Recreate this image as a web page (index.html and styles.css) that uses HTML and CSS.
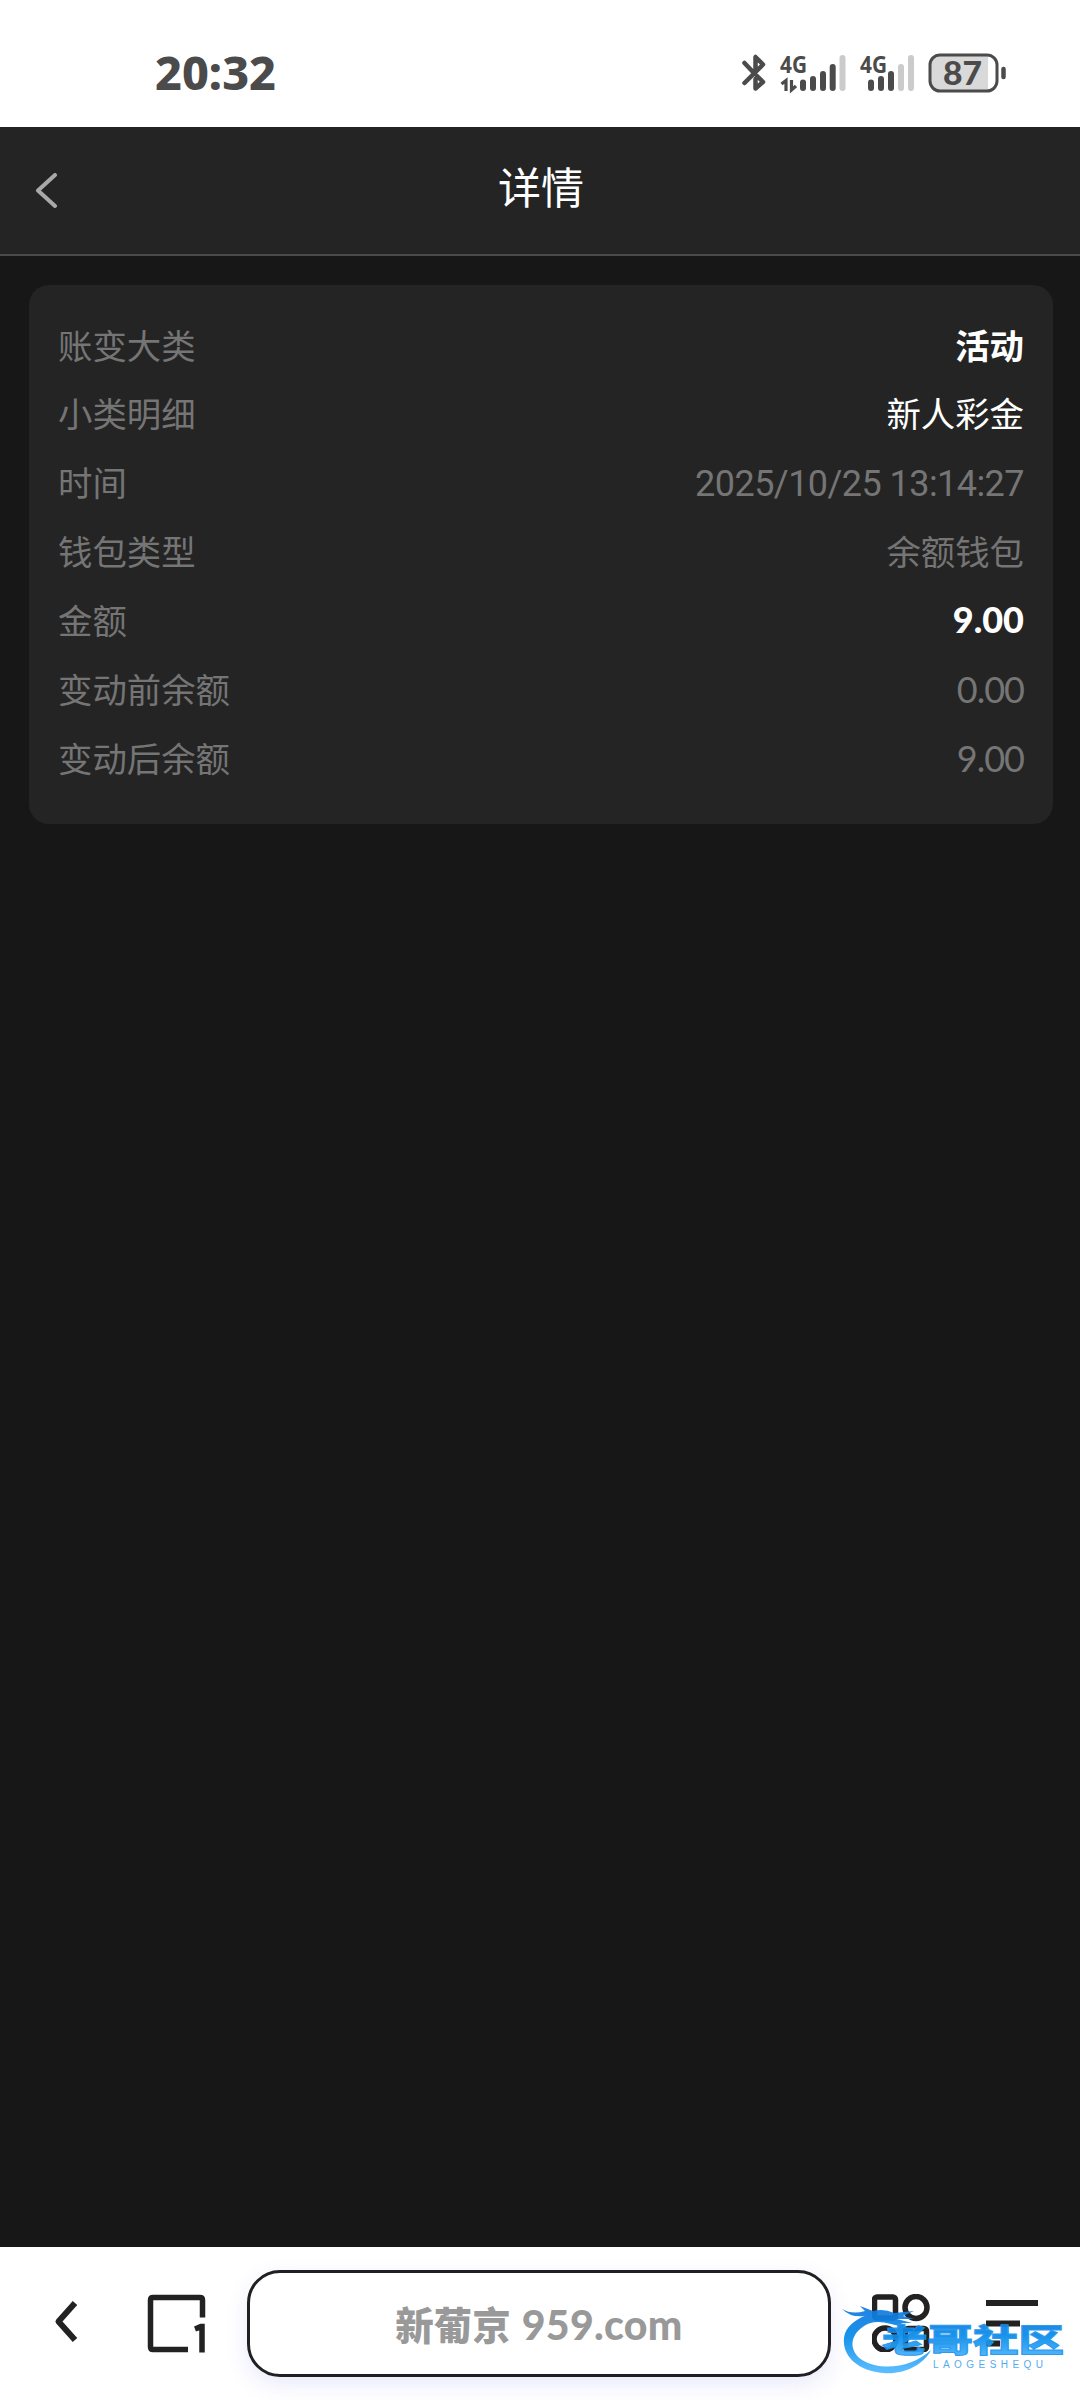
FILE: index.html
```html
<!DOCTYPE html>
<html lang="zh-CN">

<head>
  <meta charset="UTF-8">
  <meta name="viewport" content="width=device-width, initial-scale=1.0">
  <title>详情</title>
  <link rel="stylesheet" href="styles.css">
</head>

<body>
  <div class="status-bar">
    <svg class="status-svg" width="1080" height="127" viewBox="0 0 1080 127">
      <text class="clock" x="155" y="90" textLength="121" lengthAdjust="spacingAndGlyphs">20:32</text>
      <!-- bluetooth -->
      <path class="bt" d="M744.500 63 L753 72 M744.500 83 L763 64.500 L755.500 57 V70 M755.500 79 V88.500 L763 82 L757 76"/>
      <!-- sim 1 -->
      <text class="net" x="780" y="73" textLength="27" lengthAdjust="spacingAndGlyphs">4G</text>
      <path class="arrows" d="M781.500 84 L786 80.500 V91 M791.500 80 V90 L796 86"/>
      <path class="bar" d="M803 82.500 V88 M813 79 V88 M823 74 V88 M832.700 67 V88"/>
      <path class="bar off" d="M842.500 58 V88"/>
      <!-- sim 2 -->
      <text class="net" x="860" y="73" textLength="27" lengthAdjust="spacingAndGlyphs">4G</text>
      <path class="bar" d="M871 82.500 V88 M881 79 V88 M891 74 V88"/>
      <path class="bar off" d="M901 67 V88 M911 58 V88"/>
      <!-- battery -->
      <path class="fill" d="M941 55 H988 V91 H941 Q930 91 930 80 V66 Q930 55 941 55Z"/>
      <rect class="case" x="930" y="55" width="67" height="36" rx="10"/>
      <path class="tip" d="M1003.500 69 V77"/>
      <text class="level" x="943" y="84.500" textLength="39" lengthAdjust="spacingAndGlyphs">87</text>
    </svg>
  </div>

  <header class="header">
    <svg class="back" width="24" height="36" viewBox="0 0 24 36">
      <path d="M20 2 L3 17.500 L20 33"/>
    </svg>
    <h1 class="title">详情</h1>
  </header>

  <main class="content">
    <div class="card">
      <div class="row"><span>账变大类</span><span class="strong">活动</span></div>
      <div class="row"><span>小类明细</span><span class="white">新人彩金</span></div>
      <div class="row"><span>时间</span><span class="date">2025/10/25 13:14:27</span></div>
      <div class="row"><span>钱包类型</span><span>余额钱包</span></div>
      <div class="row"><span>金额</span><span class="strong num">9.00</span></div>
      <div class="row"><span>变动前余额</span><span class="num">0.00</span></div>
      <div class="row"><span>变动后余额</span><span class="num">9.00</span></div>
    </div>
  </main>

  <nav class="toolbar">
    <svg class="nav-back" width="26" height="44" viewBox="0 0 26 44">
      <path d="M21 3 L4.500 21.500 L21 40"/>
    </svg>
    <svg class="tabs" width="62" height="60" viewBox="0 0 62 60">
      <path d="M57.500 23.500 V6 Q57.500 3.500 55 3.500 H8 Q5.500 3.500 5.500 6 V53 Q5.500 55.500 8 55.500 H43"/>
      <path d="M50 35 Q54 33.500 56 32.500 H57 V58.500"/>
    </svg>
    <div class="address"><span>新葡京</span><span class="site">959.com</span></div>
    <svg class="apps" width="58" height="58" viewBox="0 0 58 58">
      <rect x="2.500" y="3" width="21" height="21" rx="2.500"/>
      <circle cx="44" cy="13.500" r="11"/>
      <circle cx="13" cy="45" r="11"/>
      <rect x="33.500" y="34.500" width="21" height="21" rx="2.500"/>
    </svg>
    <svg class="menu" width="54" height="48" viewBox="0 0 54 48">
      <path d="M1 4 H53 M1 24.500 H35 M1 44.500 H15"/>
    </svg>

    <svg class="watermark" width="240" height="100" viewBox="0 0 240 100">
      <defs>
        <linearGradient id="blue" x1="0" y1="0" x2="0" y2="1">
          <stop offset="0" stop-color="#1479dd"/>
          <stop offset=".45" stop-color="#078bea"/>
          <stop offset="1" stop-color="#52baff"/>
        </linearGradient>
      </defs>
      <path fill="url(#blue)" d="M2 8 Q12 14 25 10 L20 5 L33 10 Q44 7 54 12 L74 10 L63 15 L74 18 L57 18 L72 22 L61 22 L68 27 L51 23 Q34 18 24 25 C10 34 8 49 22 59 C42 71 73 66 91 49 C83 65 62 74 43 72 C19 70 2 56 4 37 C5 26 16 18 25 15 Q11 17 2 8Z"/>
      <text class="wm-name" x="42" y="51" textLength="182" lengthAdjust="spacingAndGlyphs">老哥社区</text>
      <text class="wm-sub" x="93" y="66.500" textLength="110">LAOGESHEQU</text>
    </svg>
  </nav>
</body>

</html>
```
FILE: styles.css
```css
* {
  box-sizing: border-box;
}

body {
  margin: 0;
  height: 2400px;
  display: flex;
  flex-direction: column;
  background: #171717;
  font-family: "Noto Sans CJK SC", sans-serif;
  overflow: hidden;
}

svg {
  display: block;
  flex: none;
  fill: none;
}

/* status bar */
.status-bar {
  height: 127px;
  background: #fff;
}

.status-svg text {
  fill: #4b4b4b;
}

.status-svg .clock {
  font: 800 46px "Noto Sans", sans-serif;
}

.net {
  font: 700 24px "Noto Sans", sans-serif;
}

.level {
  font: 900 33px Lato, sans-serif;
}

.bt {
  stroke: #4b4b4b;
  stroke-width: 4.5;
  stroke-linecap: round;
  stroke-linejoin: round;
}

.arrows {
  stroke: #4b4b4b;
  stroke-width: 3.200;
}

.bar {
  stroke: #4b4b4b;
  stroke-width: 6;
  stroke-linecap: round;
}

.bar.off {
  stroke: #cbcbcb;
}

.fill {
  fill: #d9d9d9;
}

.case {
  stroke: #4b4b4b;
  stroke-width: 3;
}

.tip {
  stroke: #4b4b4b;
  stroke-width: 4.500;
  stroke-linecap: round;
}

/* page header */
.header {
  display: grid;
  grid-template-columns: 72px 1fr 72px;
  align-items: center;
  height: 129px;
  border-bottom: 2px solid #4a4a4a;
  background: #242424;
}

.back {
  margin: 0 0 0 35px;
  stroke: #a9a9a9;
  stroke-width: 4;
  stroke-linecap: round;
  stroke-linejoin: round;
}

.title {
  margin: 0 0 11px 2px;
  color: #fff;
  font-size: 43px;
  font-weight: 400;
  line-height: 60px;
  text-align: center;
}

/* details */
.content {
  flex: 1;
  padding: 29px 27px 0 29px;
}

.card {
  height: 539px;
  padding: 24.500px 29px;
  border-radius: 20px;
  background: #242424;
}

.row {
  display: flex;
  justify-content: space-between;
  height: 68.900px;
  color: #757575;
  font-size: 34.400px;
  line-height: 68.900px;
}

.strong {
  color: #fff;
  font-weight: 700;
}

.white {
  color: #fff;
}

.date {
  padding-top: 3px;
  font-family: Roboto, sans-serif;
  font-size: 36px;
  letter-spacing: -.55px;
}

.num {
  padding-top: 1px;
  font-family: Lato, sans-serif;
  font-size: 36px;
  letter-spacing: -1px;
}

.strong.num {
  padding-top: 0;
  font-weight: 900;
  letter-spacing: 0;
}

/* browser toolbar */
.toolbar {
  position: relative;
  display: flex;
  align-items: flex-start;
  height: 153px;
  background: #fff;
}

.nav-back {
  margin: 53px 0 0 54px;
  stroke: #222;
  stroke-width: 6;
  stroke-linejoin: round;
}

.tabs {
  margin: 47px 0 0 65px;
  stroke: #222;
  stroke-width: 5.500;
}

.address {
  display: flex;
  justify-content: center;
  gap: 11px;
  width: 584px;
  height: 107px;
  margin: 23px 0 0 40px;
  border: 3px solid #202022;
  border-radius: 33px;
  background: #fff;
  box-shadow: 0 8px 22px rgba(80, 80, 220, .12);
  color: #999;
  font-size: 38.500px;
  font-weight: 900;
  line-height: 100px;
}

.site {
  padding-top: 2px;
  font-family: Lato, sans-serif;
  font-size: 41px;
  letter-spacing: .3px;
}

.apps {
  margin: 47px 0 0 41px;
  stroke: #222;
  stroke-width: 5.500;
}

.menu {
  margin: 52px 0 0 55px;
  stroke: #222;
  stroke-width: 6;
}

/* community mark over the toolbar icons */
.watermark {
  position: absolute;
  left: 840px;
  top: 54px;
  opacity: .93;
}

.wm-name {
  fill: url(#blue);
  stroke: #1d93ec;
  stroke-width: 1;
  font: 900 32px "Noto Sans CJK SC", sans-serif;
}

.wm-sub {
  fill: #47a8ef;
  font: 400 10px "Liberation Sans", sans-serif;
}
```
